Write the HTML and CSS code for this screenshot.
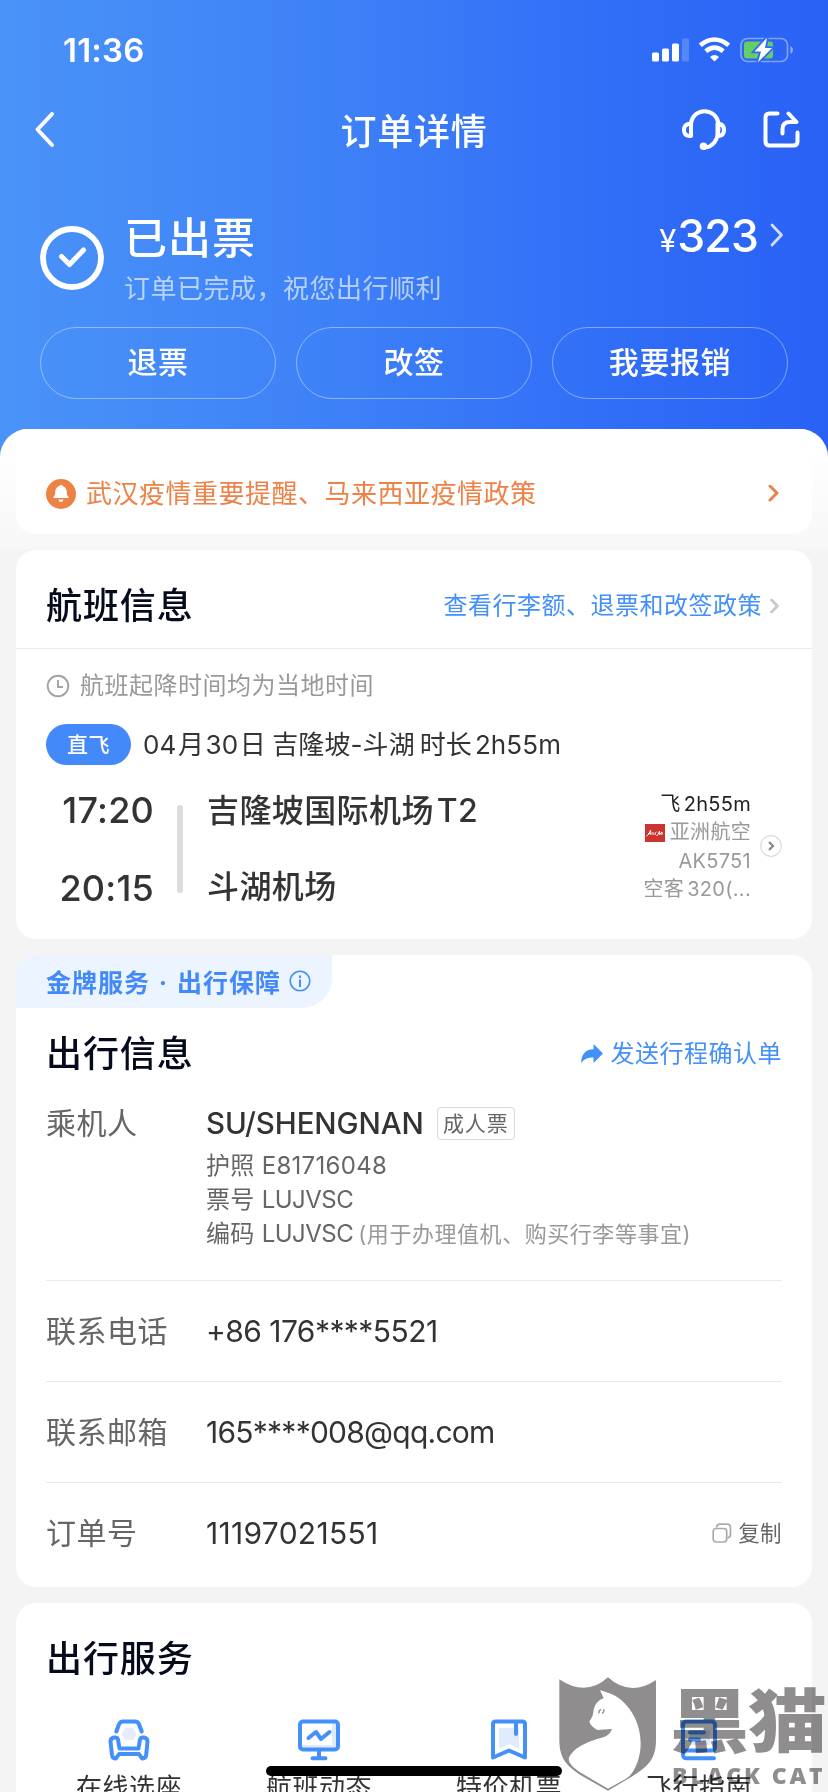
FILE: index.html
```html
<!DOCTYPE html>
<html lang="zh-CN">
<head>
<meta charset="utf-8">
<title>订单详情</title>
<link rel="stylesheet" href="styles.css">
</head>
<body>
<div class="screen">
  <header class="hero">
    <div class="status">
      <span class="clock">11:36</span>
      <svg class="status-icons" width="142" height="26" viewBox="0 0 142 26">
        <g fill="#fff">
          <rect x="0" y="15.500" width="7" height="9" rx="1.500"/>
          <rect x="10" y="11.500" width="7" height="13" rx="1.500"/>
          <rect x="20" y="6.500" width="7" height="18" rx="1.500"/>
          <rect x="30" y="1.500" width="7" height="23" rx="1.500" opacity=".2"/>
          <path d="M62.500 24.500 58 20q4.500-4 9 0Z"/>
        </g>
        <g fill="none" stroke="#fff" stroke-width="4.600">
          <path d="M48.300 8.200Q62.500-3.200 76.700 8.200"/>
          <path d="M53.800 14.300q8.700-7.200 17.400 0"/>
        </g>
        <rect x="89" y="1.500" width="46.500" height="23" rx="6.500" fill="none" stroke="#fff" stroke-opacity=".4" stroke-width="1.700"/>
        <path d="M138.500 9v8q2.500-1.300 2.500-4t-2.500-4Z" fill="#fff" fill-opacity=".5"/>
        <rect x="92" y="4.500" width="29" height="17" rx="3" fill="#65cf66"/>
        <path d="M115 .800 102.500 14.500h6.500L106 25.200 120 11h-7Z" fill="#fff" stroke="#2f6cf6" stroke-width="3.600" paint-order="stroke"/>
      </svg>
    </div>
    <nav class="nav">
      <svg width="22" height="38" viewBox="0 0 22 38"><path d="M19 3 4.500 18.500 19 34" fill="none" stroke="#fff" stroke-width="4" stroke-linecap="round" stroke-linejoin="round"/></svg>
      <h1>订单详情</h1>
      <div class="nav-actions">
        <svg width="44" height="42" viewBox="0 0 44 42" fill="none" stroke="#fff" stroke-width="4" stroke-linecap="round" stroke-linejoin="round">
          <path d="M8.800 14.500C10 7 15.500 2.200 22.500 2.200S35.500 7 36.400 14.500V20c0 11-6 18-13.500 18.500"/>
          <path d="M9 14.800H7.500Q2 15.500 2 21t5.500 6H9Z"/>
          <path d="M35.500 14.800h1.200Q42 15.500 42 21t-5.300 6h-1.200Z"/>
          <circle cx="21.500" cy="37.300" r="1.800" fill="#fff"/>
        </svg>
        <svg width="38" height="38" viewBox="0 0 38 38" fill="none" stroke="#fff" stroke-width="4" stroke-linecap="round" stroke-linejoin="round">
          <path d="M15.500 2.500H7.500Q3.500 2.500 3.500 6.500v24q0 4 4 4h24q4 0 4-4v-9"/>
          <path d="M26.500 2.500 34.500 11H28q-7.500 0-7.500 7V22.500"/>
        </svg>
      </div>
    </nav>
    <section class="state">
      <svg class="state-icon" width="64" height="64" viewBox="0 0 64 64" fill="none" stroke="#fff"><circle cx="32" cy="32" r="29" stroke-width="5.800"/><path d="m21.500 30.500 8 8L43.500 24" stroke-width="5" stroke-linecap="round" stroke-linejoin="round"/></svg>
      <div class="state-text">
        <strong>已出票</strong>
        <span>订单已完成，祝您出行顺利</span>
      </div>
      <div class="price"><i>¥</i><b>323</b><svg width="14" height="24" viewBox="0 0 14 24"><path d="m2 2 9.500 10L2 22" fill="none" stroke="#fff" stroke-opacity=".8" stroke-width="2.700" stroke-linecap="round" stroke-linejoin="round"/></svg></div>
    </section>
    <div class="buttons"><a>退票</a><a>改签</a><a>我要报销</a></div>
    <div class="sheet">
      <div class="notice">
        <svg width="30" height="30" viewBox="0 0 30 30"><circle cx="15" cy="15" r="15" fill="#ee8146"/><path d="M15 6q1.500 0 2 1.200c3 1 3.800 3.500 3.800 6.300 0 2.500.7 3.200 1.700 4.500V19h-15v-1c1-1.300 1.700-2 1.700-4.500 0-2.800.8-5.300 3.800-6.300Q13.500 6 15 6Zm-2.500 14.500h5q-.6 2.500-2.500 2.500t-2.500-2.500Z" fill="#fff"/></svg>
        <span>武汉疫情重要提醒、马来西亚疫情政策</span>
        <svg class="end" width="12" height="18" viewBox="0 0 12 18"><path d="m3 1 7 7-7 7" fill="none" stroke="#ee8146" stroke-width="3" stroke-linecap="round" stroke-linejoin="round"/></svg>
      </div>
    </div>
  </header>

  <main>
    <section class="card flight">
      <div class="card-head">
        <h2>航班信息</h2>
        <span class="link">查看行李额、退票和改签政策</span>
        <svg width="12" height="18" viewBox="0 0 12 18"><path d="m2.500 3 6 6-6 6" fill="none" stroke="#c9c9c9" stroke-width="2.800" stroke-linecap="round" stroke-linejoin="round"/></svg>
      </div>
      <div class="hint">
        <svg width="24" height="24" viewBox="0 0 24 24" fill="none" stroke="#a3a3a3" stroke-width="1.900"><circle cx="12" cy="12" r="10.300"/><path d="M12 6v7h5"/></svg>
        <span>航班起降时间均为当地时间</span>
      </div>
      <div class="route"><span class="pill">直飞</span><span class="route-text">04<em>月</em>30<em>日</em> 吉隆坡-斗湖 时长<em></em>2h55m</span></div>
      <div class="leg">
        <div class="times"><span>17:20</span><span>20:15</span></div>
        <div class="bar"></div>
        <div class="ports"><span>吉隆坡国际机场<em></em>T2</span><span>斗湖机场</span></div>
        <div class="plane">
          <span class="dark">飞<em></em>2h55m</span>
          <span><svg width="20" height="18" viewBox="0 0 20 18"><rect width="20" height="18" fill="#cb3430"/><path d="M1.500 12q3-1 4-6l.5 5M3 9.500h3M8 8v3M10 11q0-3 1.500-3M11.500 12q2-1.500 3-5l.3 4M15 10q2-1 1.500-2M17 8v3" fill="none" stroke="#fff" stroke-width="1"/></svg>亚洲航空</span>
          <span class="code">AK5751</span>
          <span>空客<em></em>320(...</span>
        </div>
        <svg class="more" width="22" height="22" viewBox="0 0 22 22" fill="none"><circle cx="11" cy="11" r="10.300" stroke="#ddd" stroke-width="1.200"/><path d="m9 7 4 4-4 4" stroke="#888" stroke-width="2.200"/></svg>
      </div>
    </section>

    <section class="card trip">
      <div class="tab"><span>金牌服务<u>·</u>出行保障</span><svg width="22" height="22" viewBox="0 0 22 22" fill="none" stroke="#4390fa"><circle cx="11" cy="11" r="9.800" stroke-width="1.600"/><path d="M11 9.500V17M11 5.500V8" stroke-width="2"/></svg></div>
      <div class="trip-head">
        <h2>出行信息</h2>
        <svg width="22" height="20" viewBox="0 0 22 20"><path d="M12.500 0 22 9.500 12.500 19v-5.500C7 13.300 3 15 .300 19 0 11 4 5.500 12.500 5.300Z" fill="#4390fa"/></svg>
        <span class="link">发送行程确认单</span>
      </div>
      <div class="row passenger">
        <span class="label">乘机人</span>
        <div class="detail">
          <div class="name"><b>SU/SHENGNAN</b><span class="tag">成人票</span></div>
          <p>护照 <i>E81716048</i></p>
          <p>票号 <i class="pnr">LUJVSC</i></p>
          <p>编码 <i class="pnr">LUJVSC</i><small>(用于办理值机、购买行李等事宜)</small></p>
        </div>
      </div>
      <div class="row"><span class="label">联系电话</span><span class="value phone">+86 176****5521</span></div>
      <div class="row"><span class="label">联系邮箱</span><span class="value mail">165****008@qq.com</span></div>
      <div class="row"><span class="label">订单号</span><span class="value order">11197021551</span>
        <span class="copy"><svg width="20" height="20" viewBox="0 0 20 20" fill="none" stroke="#aaa" stroke-width="1.700"><rect x="1.200" y="5.500" width="13.500" height="13.500" rx="3"/><path d="M4.500 4.500Q4.700 1.200 7.500 1.200H15q3.500 0 3.500 3.500V11q0 3.500-3 4"/></svg>复制</span></div>
    </section>

    <section class="card services">
      <h2>出行服务</h2>
      <div class="grid">
        <div class="service">
          <svg width="42" height="42" viewBox="0 0 42 42" fill="none" stroke="#4390fa" stroke-width="4" stroke-linecap="round" stroke-linejoin="round"><path d="m17 9h8l3.500 6.500L25 21h-8l-3.500-5.500Z" fill="#e6ecf9" stroke="none"/><path d="M8.300 12.500 11 5.200Q12.200 2.500 15 2.500h12q2.800 0 4 2.700l2.700 7.300"/><path d="M11.500 29.500h19L32 20.500Q32.800 18 36 18.500q3.500.7 3.500 4L38.200 36Q37.500 39.500 34 39.500L31 35H11l-3 4.500Q4.500 39.500 4 36L2.500 22.500q0-3.300 3.500-4 3.200-.5 4 2Z"/></svg>
          <span>在线选座</span>
        </div>
        <div class="service">
          <svg width="42" height="42" viewBox="0 0 42 42" fill="none" stroke="#4390fa" stroke-width="4" stroke-linecap="round" stroke-linejoin="round"><path d="M4 26h30V4h5v27H4Z" fill="#dfebfc" stroke="none"/><rect x="2" y="2.500" width="38" height="28" rx="3"/><path d="m10.500 19 7.500-6 5 7 8.500-7M21 32v7M14.500 39.200h13"/></svg>
          <span>航班动态</span>
        </div>
        <div class="service">
          <svg width="42" height="42" viewBox="0 0 42 42" fill="none" stroke="#4390fa" stroke-width="4" stroke-linecap="round" stroke-linejoin="round"><path d="M11 9h20v21l-10-5-10 5Z" fill="#e0ebfd" stroke="none"/><path d="M5 5q0-2.500 2.500-2.500h27Q37 2.500 37 5v33.500L21 31.500 5 38.500ZM28 4v11"/></svg>
          <span>特价机票</span>
        </div>
        <div class="service">
          <svg width="42" height="42" viewBox="0 0 42 42" fill="none" stroke="#4390fa" stroke-width="4" stroke-linecap="round" stroke-linejoin="round"><path d="M12 11h20v15H12Z" fill="#dde9fc" stroke="none"/><path d="M5 32V6q0-3.500 3.500-3.500h25Q37 2.500 37 6v22q0 3.500-3.500 3.500H9Q5 31.500 5 35.500t4 3.800h27M12 13.500h14M12 20.500h9"/></svg>
          <span>飞行指南</span>
        </div>
      </div>
    </section>
  </main>

  <div class="home-bar"></div>
  <div class="watermark">
    <svg width="98" height="115" viewBox="57 51 294 345"><path d="M58 58Q138 112 204 52 270 112 348 60V240C348 300 320 322 275 350L204 392 130 350C85 322 58 300 58 240Z" fill="#8f8d8e"/><path d="m180 90 19 7C248 108 302 170 302 250 302 300 280 345 258 356L204 386 120 337C100 322 86 310 86 296 100 258 160 240 190 232 205 226 212 218 216 207L172 210C158 202 146 190 149 182 156 172 160 165 160 155 162 135 175 120 191 115Z" fill="#fff"/><path d="M183 148q-8 4-6 12M186 160q8-3 5-12" fill="none" stroke="#8f8d8e" stroke-width="4"/></svg>
    <div class="brand"><b>黑猫</b><span>BLACK CAT</span></div>
  </div>
</div>
</body>
</html>
```
FILE: styles.css
```css
* { box-sizing: border-box; }
body { margin: 0; background: #f4f4f4; font-family: Inter, "Noto Sans CJK SC", sans-serif; color: #333; }
h1, h2, p { margin: 0; }
svg { display: block; flex: none; }
i { font-style: normal; }
.screen { position: relative; width: 828px; height: 1792px; overflow: hidden; }

.hero { height: 549px; background: linear-gradient(90deg, #4a93f8 0%, #3d80f7 42%, #3270f7 70%, #2961f5 100%); color: #fff; display: flex; flex-direction: column; }
.status { height: 88px; padding: 11px 34px 0 63px; display: flex; justify-content: space-between; align-items: center; }
.clock { font-size: 33px; font-weight: 600; letter-spacing: .2px; }
.nav { height: 84px; padding: 0 28px 0 33px; display: grid; grid-template-columns: 120px 1fr 118px; align-items: center; }
.nav h1 { font-size: 36px; line-height: 44px; font-weight: 500; letter-spacing: .7px; text-align: center; padding: 4px 7px 0 0; }
.nav-actions { display: flex; justify-content: space-between; align-items: center; }
.state { height: 155px; padding: 0 44px 0 40px; display: flex; align-items: flex-start; }
.state-icon { margin-top: 54px; }
.state-text { margin-left: 20px; flex: 1; display: flex; flex-direction: column; padding-top: 40px; }
.state-text strong { font-size: 43px; line-height: 52px; font-weight: 500; letter-spacing: 1px; }
.state-text span { font-size: 26px; line-height: 32px; margin-top: 9px; letter-spacing: .5px; color: rgba(255, 255, 255, .62); }
.price { display: flex; align-items: baseline; margin-top: 38px; line-height: 52px; }
.price i { font-size: 31px; font-weight: 400; margin-right: 1px; }
.price b { font-size: 44.500px; font-weight: 500; letter-spacing: -.8px; }
.price svg { margin-left: 12px; align-self: flex-start; margin-top: 13px; }
.buttons { height: 72px; padding: 0 40px; display: grid; grid-template-columns: repeat(3, 1fr); gap: 20px; }
.buttons a { border: 1px solid rgba(255, 255, 255, .4); border-radius: 36px; font-size: 30px; line-height: 69px; font-weight: 500; letter-spacing: .6px; text-align: center; }
.sheet { margin-top: 30px; height: 120px; padding: 0 16px; border-radius: 28px 28px 0 0; overflow: hidden; background: linear-gradient(#fff 15%, #f7f7f7); }
.notice { height: 105px; padding: 25px 33px 0 30px; border-radius: 0 0 20px 20px; background: #fff; color: #ee8146; display: flex; align-items: center; font-size: 26px; letter-spacing: .5px; }
.notice span { margin-left: 10px; line-height: 32px; }
.end { margin-left: auto; }

main { padding: 1px 16px 0; display: flex; flex-direction: column; gap: 16px; }
.card { background: #fff; border-radius: 20px; flex: none; }
h2 { font-size: 36px; line-height: 44px; font-weight: 500; letter-spacing: .9px; color: #050a1c; }
.link { font-size: 24px; line-height: 30px; letter-spacing: .5px; color: #4390fa; }
.card-head { height: 99px; padding: 13px 31px 0 30px; display: flex; align-items: center; border-bottom: 1px solid #eaeaea; }
.card-head .link { margin-left: auto; margin-right: 7px; }
.flight { height: 389px; }
.hint { height: 75px; padding: 0 0 1px 30px; display: flex; align-items: center; font-size: 24px; letter-spacing: .5px; color: #999; }
.hint svg { margin-right: 10px; }
.hint span { line-height: 30px; }
.route { height: 41px; padding-left: 30px; display: flex; align-items: center; }
.pill { width: 85px; height: 41px; border-radius: 21px; background: #4389f9; color: #fff; font-size: 21px; line-height: 41px; font-weight: 500; letter-spacing: .6px; text-align: center; }
.route-text { margin-left: 12px; font-size: 26px; line-height: 32px; letter-spacing: .1px; word-spacing: -2.500px; white-space: pre; }
em { font-style: normal; padding: 0 1.500px; }
.leg { height: 128px; margin-top: 20px; padding-right: 30px; display: flex; }
.times { width: 108px; display: flex; flex-direction: column; gap: 34px; text-align: right; font-size: 36px; line-height: 44px; font-weight: 500; padding: 3px 0 0; margin-left: 30px; letter-spacing: .2px; }
.bar { width: 6px; height: 88px; margin: 20px 24px 0 23px; border-radius: 3px; background: #dcdcdc; }
.ports { display: flex; flex-direction: column; gap: 32px; font-size: 32px; line-height: 44px; font-weight: 500; letter-spacing: .4px; padding-top: 4px; white-space: nowrap; }
.plane { margin-left: auto; padding-top: 5px; display: flex; flex-direction: column; align-items: flex-end; font-size: 20px; line-height: 28.400px; letter-spacing: .3px; color: #999; white-space: nowrap; }
.plane span { display: flex; align-items: center; }
.plane svg { margin-right: 5px; }
.dark { color: #222; }
.more { margin: 50px 0 0 9px; }

.trip { height: 632px; overflow: hidden; }
.tab { width: 316px; height: 53px; padding: 0 0 2px 30px; border-radius: 0 0 30px 0; background: #ebf4ff; color: #4389f9; display: flex; align-items: center; font-size: 25px; font-weight: 700; letter-spacing: 1px; }
.tab u { text-decoration: none; display: inline-block; width: 27px; text-align: center; }
.tab svg { margin-left: 8px; }
.trip-head { height: 90px; padding: 1px 30px 0 30px; display: flex; align-items: center; }
.trip-head svg { margin-left: auto; margin-right: 8px; }
.row { height: 101px; margin: 0 30px; display: flex; align-items: center; border-bottom: 1px solid #eaeaea; }
.row:last-child { border: 0; padding-bottom: 2px; }
.label { width: 160px; font-size: 30px; line-height: 40px; letter-spacing: .5px; color: #666; }
.value { font-size: 30px; line-height: 40px; }
.phone { letter-spacing: -.55px; }
.mail { letter-spacing: -.75px; }
.order { letter-spacing: .3px; }
.passenger { height: 183px; align-items: flex-start; padding-top: 5px; }
.name { display: flex; align-items: center; height: 40px; }
.name b { font-size: 29.500px; font-weight: 500; letter-spacing: -.1px; }
.tag { margin-left: 13px; width: 78px; height: 33px; border: 1px solid #d8d8d8; border-radius: 4px; text-align: center; font-size: 21px; line-height: 31px; letter-spacing: .8px; color: #666; }
.detail p { font-size: 24px; line-height: 34px; color: #666; white-space: pre; letter-spacing: .3px; }
.detail .pnr { letter-spacing: -.5px; }
.name + p { margin-top: 6px; }
.detail small { font-size: 22px; color: #999; margin-left: 5px; letter-spacing: .55px; }
.copy { margin-left: auto; display: flex; align-items: center; gap: 6px; font-size: 21.500px; line-height: 28px; letter-spacing: .4px; color: #666; }

.services { height: 260px; padding-top: 34px; }
.services h2 { padding-left: 30px; }
.grid { margin: 38px 18px 0; display: grid; grid-template-columns: repeat(4, 190px); }
.service { display: flex; flex-direction: column; align-items: center; gap: 11px; font-size: 26px; line-height: 32px; letter-spacing: .5px; }

.home-bar { position: absolute; left: 266px; top: 1766px; width: 296px; height: 10px; border-radius: 5px; background: #000; }
.watermark { position: absolute; left: 559px; top: 1677px; display: flex; mix-blend-mode: multiply; color: #8f8d8e; }
.brand { margin-left: 13px; white-space: nowrap; }
.brand b { display: block; margin-top: 0; font: 900 79px/80px "Noto Sans CJK SC", sans-serif; letter-spacing: -1px; transform: scaleY(.88); }
.brand span { display: block; font: 800 23px/24px "Open Sans", sans-serif; margin: 6px 0 0 2px; letter-spacing: 2.900px; }
```
